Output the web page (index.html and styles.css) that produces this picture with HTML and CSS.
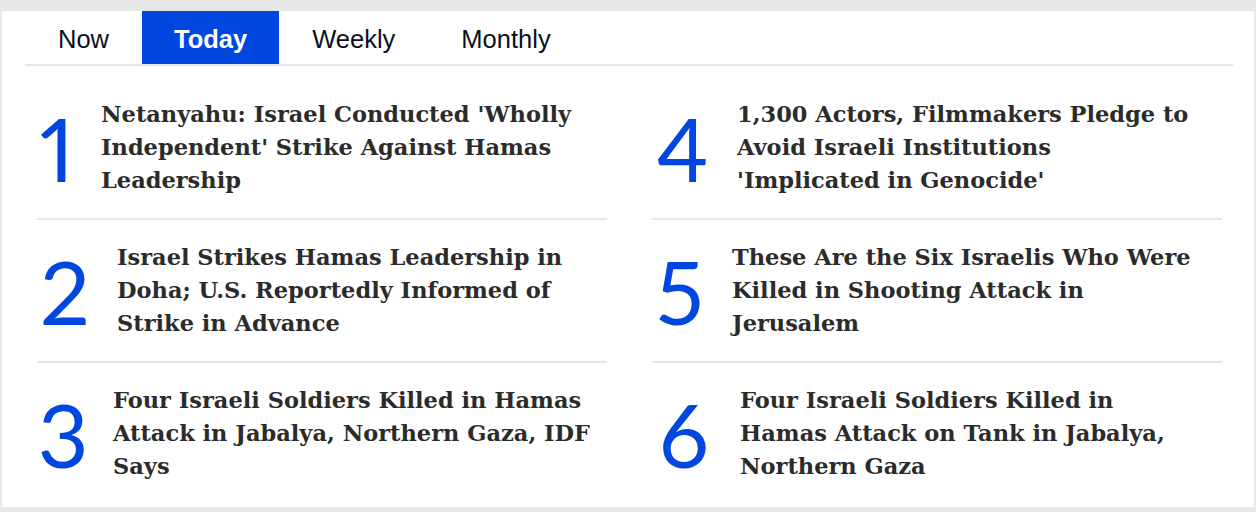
FILE: index.html
```html
<!DOCTYPE html>
<html>
<head>
<meta charset="utf-8">
<link rel="stylesheet" href="styles.css">
</head>
<body>
<div class="card">
  <nav class="tabs">
    <span class="tab">Now</span>
    <span class="tab active">Today</span>
    <span class="tab">Weekly</span>
    <span class="tab">Monthly</span>
  </nav>
  <div class="list">
    <div class="col">
      <div class="item"><span class="num n1">1</span><span class="title">Netanyahu: Israel Conducted 'Wholly<br>Independent' Strike Against Hamas<br>Leadership</span></div>
      <div class="item"><span class="num n2">2</span><span class="title">Israel Strikes Hamas Leadership in<br>Doha; U.S. Reportedly Informed of<br>Strike in Advance</span></div>
      <div class="item last"><span class="num n3">3</span><span class="title">Four Israeli Soldiers Killed in Hamas<br>Attack in Jabalya, Northern Gaza, IDF<br>Says</span></div>
    </div>
    <div class="col">
      <div class="item"><span class="num n4">4</span><span class="title">1,300 Actors, Filmmakers Pledge to<br>Avoid Israeli Institutions<br>'Implicated in Genocide'</span></div>
      <div class="item"><span class="num n5">5</span><span class="title">These Are the Six Israelis Who Were<br>Killed in Shooting Attack in<br>Jerusalem</span></div>
      <div class="item last"><span class="num n6">6</span><span class="title">Four Israeli Soldiers Killed in<br>Hamas Attack on Tank in Jabalya,<br>Northern Gaza</span></div>
    </div>
  </div>
</div>
</body>
</html>
```

FILE: styles.css
```css
html, body {
  margin: 0;
  padding: 0;
}
body {
  background: #e8e8e8;
  width: 1256px;
  height: 512px;
  overflow: hidden;
}
.card {
  background: #ffffff;
  margin: 11px 2px 0 2px;
  height: 496px;
  padding: 0 21px 0 23px;
  box-sizing: border-box;
}
.tabs {
  display: flex;
  border-bottom: 2px solid #e6e6e6;
  height: 53px;
}
.tab {
  padding: 4px 33px 0 33px;
  height: 53px;
  display: flex;
  align-items: center;
  box-sizing: border-box;
  font-family: "Liberation Sans", Arial, sans-serif;
  font-size: 25.5px;
  color: #0b1020;
}
.tab.active {
  background: #0047e0;
  color: #ffffff;
  font-weight: bold;
  padding: 4px 32px 0 32px;
}
.list {
  display: flex;
  gap: 45px;
  padding: 11px 11px 0 12px;
}
.col {
  flex: 1;
  display: flex;
  flex-direction: column;
}
.item {
  display: flex;
  align-items: center;
  gap: 24px;
  padding: 21px 0;
  border-bottom: 2px solid #e6e6e6;
}
.item.last {
  border-bottom: none;
}
.num {
  font-family: Lato, "DejaVu Sans", sans-serif;
  font-weight: 400;
  font-variant-numeric: proportional-nums;
  font-size: 88px;
  line-height: 70px;
  color: #0047e0;
  flex: none;
  text-align: center;
}
.n1 { width: 40px; }
.n2 { width: 56px; }
.n3 { width: 52px; }
.n4 { width: 61px; }
.n5 { width: 56px; }
.n6 { width: 64px; }
.title {
  font-family: "DejaVu Serif", serif;
  font-weight: bold;
  font-size: 22.5px;
  line-height: 33px;
  color: #2b2b2b;
  height: 99px;
  display: flex;
  align-items: center;
  white-space: nowrap;
}
```
